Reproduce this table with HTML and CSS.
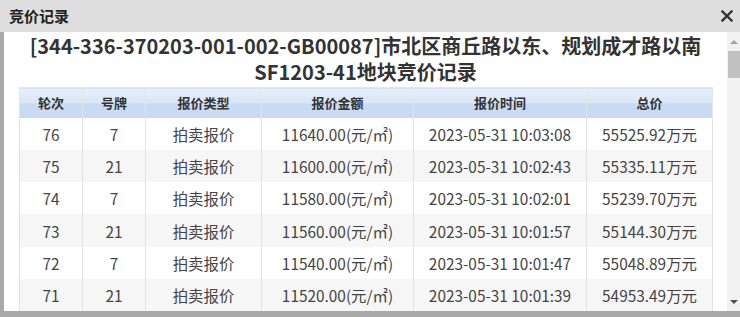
FILE: index.html
```html
<!DOCTYPE html>
<html lang="zh">
<head>
<meta charset="utf-8">
<link rel="stylesheet" href="styles.css">
</head>
<body>
<div class="win">
  <div class="titlebar">
    <span class="title">竞价记录</span>
    <svg class="close" width="12" height="12" viewBox="0 0 12 12"><path d="M1.5 1.5 L10.5 10.5 M10.5 1.5 L1.5 10.5" stroke="#333" stroke-width="2.4" stroke-linecap="square"/></svg>
  </div>
  <div class="body">
    <div class="content">
      <h1 class="heading">[344-336-370203-001-002-GB00087]市北区商丘路以东、规划成才路以南<br>SF1203-41地块竞价记录</h1>
      <table class="grid">
        <colgroup>
          <col class="c1"><col class="c2"><col class="c3"><col class="c4"><col class="c5"><col class="c6">
        </colgroup>
        <thead>
          <tr><th>轮次</th><th>号牌</th><th>报价类型</th><th>报价金额</th><th>报价时间</th><th>总价</th></tr>
        </thead>
        <tbody>
          <tr><td>76</td><td>7</td><td>拍卖报价</td><td>11640.00(元/㎡)</td><td>2023-05-31 10:03:08</td><td>55525.92万元</td></tr>
          <tr><td>75</td><td>21</td><td>拍卖报价</td><td>11600.00(元/㎡)</td><td>2023-05-31 10:02:43</td><td>55335.11万元</td></tr>
          <tr><td>74</td><td>7</td><td>拍卖报价</td><td>11580.00(元/㎡)</td><td>2023-05-31 10:02:01</td><td>55239.70万元</td></tr>
          <tr><td>73</td><td>21</td><td>拍卖报价</td><td>11560.00(元/㎡)</td><td>2023-05-31 10:01:57</td><td>55144.30万元</td></tr>
          <tr><td>72</td><td>7</td><td>拍卖报价</td><td>11540.00(元/㎡)</td><td>2023-05-31 10:01:47</td><td>55048.89万元</td></tr>
          <tr><td>71</td><td>21</td><td>拍卖报价</td><td>11520.00(元/㎡)</td><td>2023-05-31 10:01:39</td><td>54953.49万元</td></tr>
        </tbody>
      </table>
    </div>
    <div class="scrollbar">
      <div class="arrow up"></div>
      <div class="thumb"></div>
      <div class="track"></div>
      <div class="arrow down"></div>
    </div>
  </div>
</div>
</body>
</html>
```
FILE: styles.css
```css
html, body {
  margin: 0;
  padding: 0;
  background: #a9a9a9;
}
.win {
  width: 740px;
  height: 317px;
  display: flex;
  flex-direction: column;
  font-family: "Noto Sans CJK SC", "Noto Sans", sans-serif;
  color: #333;
  overflow: hidden;
}
.titlebar {
  height: 32px;
  flex: none;
  background: #dedede;
  display: flex;
  align-items: center;
  justify-content: space-between;
  padding: 0 7px 0 9px;
  box-sizing: border-box;
}
.title {
  font-size: 15px;
  font-weight: bold;
  color: #222;
  line-height: 20px;
}
.close {
  display: block;
}
.body {
  height: 279px;
  flex: none;
  margin-left: 4px;
  display: flex;
  background: #fff;
}
.content {
  flex: 1;
  overflow: hidden;
  padding: 1px 15px 0 15px;
}
.heading {
  margin: 0 0 2px 0;
  text-align: center;
  font-size: 20px;
  font-weight: bold;
  line-height: 26px;
  color: #333;
  white-space: nowrap;
}
.grid {
  border-collapse: collapse;
  table-layout: fixed;
  width: 693px;
}
.c1, .c2 { width: 63px; }
.c3 { width: 116px; }
.c4 { width: 152px; }
.c5 { width: 173px; }
.c6 { width: 126px; }
.grid th {
  height: 30px;
  padding: 0;
  font-size: 13px;
  font-weight: bold;
  color: #333;
  background: linear-gradient(#e7effa 0%, #d9e6f6 48%, #c9dbf2 52%, #c7daf2 100%);
  border-left: 1px solid #e4e4e4;
  border-right: 1px solid #e4e4e4;
  border-top: 1px solid #e6e6e6;
  box-sizing: border-box;
}
.grid td {
  height: 32.33px;
  padding: 0;
  text-align: center;
  font-size: 15.4px;
  color: #444;
  border-left: 1px solid #e2e2e2;
  border-right: 1px solid #e2e2e2;
  box-sizing: border-box;
  white-space: nowrap;
}
.grid tbody tr:nth-child(even) td {
  background: #f6f6f6;
}
.scrollbar {
  width: 13px;
  flex: none;
  background: #f1f1f1;
  display: flex;
  flex-direction: column;
}
.arrow {
  height: 19px;
  flex: none;
  position: relative;
}
.arrow::after {
  content: "";
  position: absolute;
  left: 3px;
  width: 0;
  height: 0;
  border-left: 4px solid transparent;
  border-right: 4px solid transparent;
}
.arrow.up::after {
  top: 8px;
  border-bottom: 4px solid #a3a3a3;
}
.arrow.down::after {
  bottom: 7px;
  border-top: 4px solid #505050;
}
.thumb {
  height: 27px;
  flex: none;
  background: #c1c1c1;
  margin-left: 1px;
}
.track {
  flex: 1;
}
```
